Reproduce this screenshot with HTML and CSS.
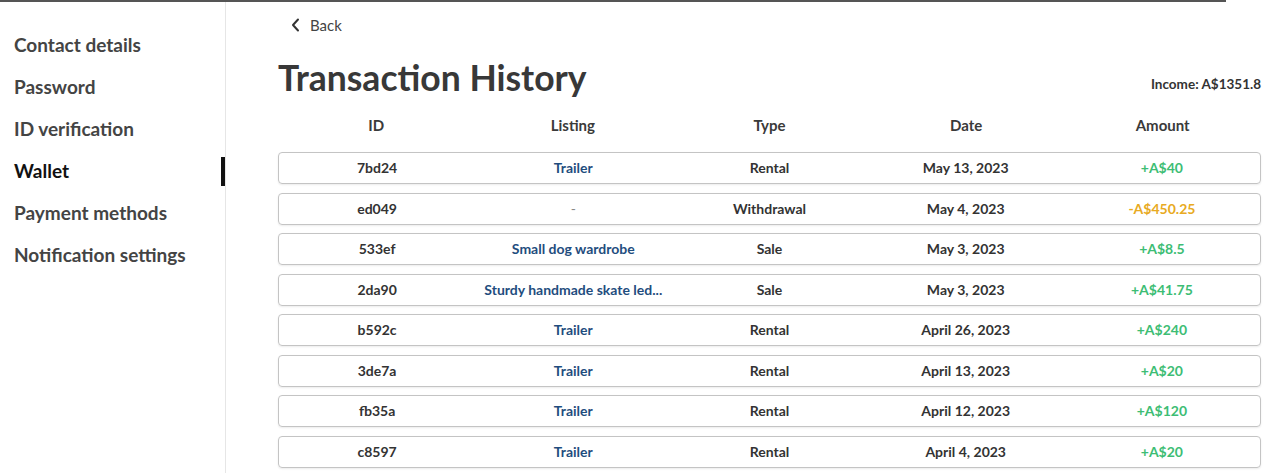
FILE: index.html
```html
<!DOCTYPE html>
<html lang="en">
<head>
<meta charset="utf-8">
<title>Transaction History</title>
<link rel="stylesheet" href="styles.css">
</head>
<body>
<div class="topline"></div>
<div class="layout">
  <nav class="sidebar">
    <a class="nav-item">Contact details</a>
    <a class="nav-item">Password</a>
    <a class="nav-item">ID verification</a>
    <a class="nav-item active">Wallet</a>
    <a class="nav-item">Payment methods</a>
    <a class="nav-item">Notification settings</a>
  </nav>
  <main class="main">
    <a class="back">
      <svg class="chev" width="9" height="14" viewBox="0 0 9 14"><path d="M7 1.5 L2 7 L7 12.5" fill="none" stroke="#333" stroke-width="2" stroke-linecap="round" stroke-linejoin="round"/></svg>
      <span>Back</span>
    </a>
    <div class="title-row">
      <h1 class="title">Transaction History</h1>
      <div class="income">Income: A$1351.8</div>
    </div>
    <div class="table">
      <div class="thead">
        <div>ID</div><div>Listing</div><div>Type</div><div>Date</div><div>Amount</div>
      </div>
      <div class="row"><div>7bd24</div><div class="link">Trailer</div><div>Rental</div><div>May 13, 2023</div><div class="pos">+A$40</div></div>
      <div class="row"><div>ed049</div><div class="dash">-</div><div>Withdrawal</div><div>May 4, 2023</div><div class="neg">-A$450.25</div></div>
      <div class="row"><div>533ef</div><div class="link">Small dog wardrobe</div><div>Sale</div><div>May 3, 2023</div><div class="pos">+A$8.5</div></div>
      <div class="row"><div>2da90</div><div class="link">Sturdy handmade skate led...</div><div>Sale</div><div>May 3, 2023</div><div class="pos">+A$41.75</div></div>
      <div class="row"><div>b592c</div><div class="link">Trailer</div><div>Rental</div><div>April 26, 2023</div><div class="pos">+A$240</div></div>
      <div class="row"><div>3de7a</div><div class="link">Trailer</div><div>Rental</div><div>April 13, 2023</div><div class="pos">+A$20</div></div>
      <div class="row"><div>fb35a</div><div class="link">Trailer</div><div>Rental</div><div>April 12, 2023</div><div class="pos">+A$120</div></div>
      <div class="row"><div>c8597</div><div class="link">Trailer</div><div>Rental</div><div>April 4, 2023</div><div class="pos">+A$20</div></div>
    </div>
  </main>
</div>
</body>
</html>
```

FILE: styles.css
```css
* { box-sizing: border-box; }
html, body { margin: 0; padding: 0; background: #fff; }
body {
  font-family: Lato, "Open Sans", Arial, sans-serif;
  color: #333;
  overflow: hidden;
  height: 473px;
}
.topline {
  width: 1226px;
  height: 2px;
  background: #555;
}
.layout {
  display: flex;
  height: 471px;
}
.sidebar {
  width: 226px;
  flex: none;
  border-right: 1px solid #e6e6e6;
  padding-top: 31px;
  display: flex;
  flex-direction: column;
}
.nav-item {
  display: block;
  height: 42px;
  line-height: 24px;
  padding-left: 14px;
  font-size: 19px;
  font-weight: 700;
  color: #444;
  position: relative;
}
.nav-item.active {
  color: #111;
}
.nav-item.active::after {
  content: "";
  position: absolute;
  right: 0;
  top: -2px;
  width: 4px;
  height: 29px;
  background: #111;
}
.main {
  flex: 1;
  padding-left: 52px;
  padding-right: 19px;
  padding-top: 13px;
}
.back {
  display: flex;
  align-items: center;
  gap: 10px;
  margin-left: 13px;
  font-size: 15px;
  color: #444;
  height: 20px;
}
.title-row {
  display: flex;
  justify-content: space-between;
  align-items: flex-end;
  margin-top: 21px;
}
.title {
  margin: 0;
  font-size: 35.5px;
  line-height: 44px;
  font-weight: 700;
  color: #383838;
}
.income {
  font-size: 13.5px;
  font-weight: 700;
  color: #333;
  padding-bottom: 8px;
}
.table {
  margin-top: 4px;
}
.thead, .row {
  display: grid;
  grid-template-columns: repeat(5, 1fr);
  text-align: center;
}
.thead {
  height: 42px;
  line-height: 42px;
  margin-bottom: 6px;
  font-size: 15px;
  font-weight: 700;
  color: #3a3a3a;
}
.row {
  height: 32px;
  line-height: 30px;
  border: 1px solid #c4c4c4;
  border-radius: 4px;
  box-shadow: 0 1px 2px rgba(0,0,0,0.08);
  margin-bottom: 8.5px;
  font-size: 14px;
  font-weight: 700;
  color: #333;
}
.link { color: #1f4d7e; }
.dash { color: #888; font-weight: 400; }
.pos { color: #3dbd74; }
.neg { color: #e8aa22; }
```
